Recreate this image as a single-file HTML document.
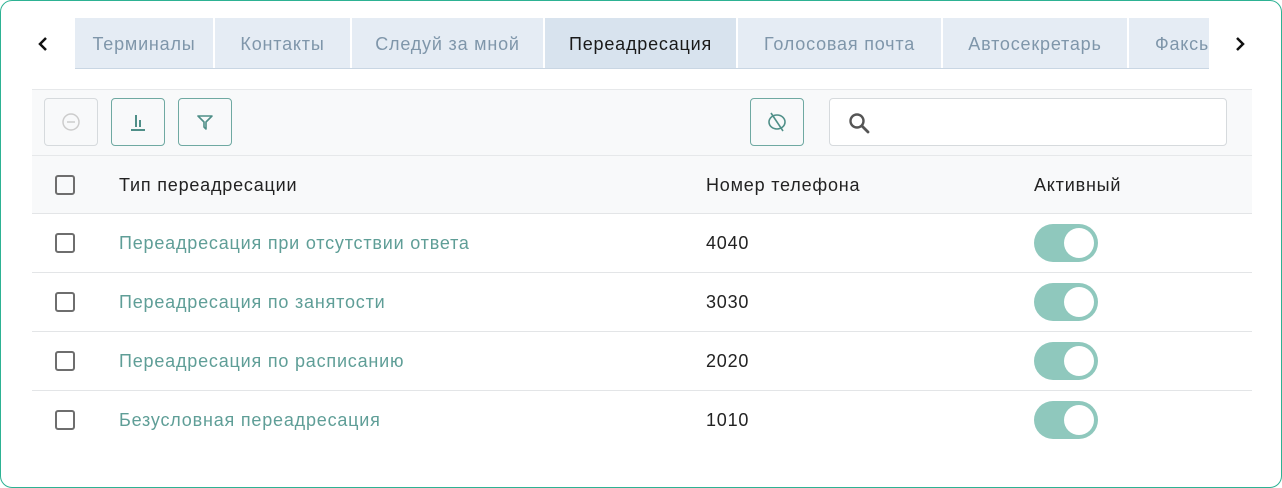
<!DOCTYPE html>
<html><head><meta charset="utf-8"><style>
*{box-sizing:border-box;margin:0;padding:0}
body{width:1282px;height:488px;background:#fff;font-family:"Liberation Sans","DejaVu Sans",sans-serif;position:relative;overflow:hidden;letter-spacing:0.8px}
.frame{position:absolute;left:0;top:0;width:1282px;height:488px;border:1.5px solid #2db293;border-radius:12px}
.tabs{position:absolute;left:75px;top:18px;height:51px;width:1134px;display:flex;overflow:hidden;background:#e5ecf4;border-bottom:1px solid #c9d6e3}
.tab{height:50px;line-height:52px;text-align:center;font-size:18px;color:#7f96aa;border-right:2px solid #fff;flex:none;white-space:nowrap}
.tab.act{background:#d8e3ee;color:#1a1a1a}
.tb{position:absolute;left:32px;top:89px;width:1220px;height:66px;background:#f8f9fa;border-top:1px solid #e6e8ea}
.btn{position:absolute;top:98px;width:54px;height:48px;border:1px solid #6fa9a2;border-radius:4px;background:#f8f9fa;display:flex;align-items:center;justify-content:center}
.btn.dis{border-color:#d6dadd}
.search{position:absolute;left:829px;top:98px;width:398px;height:48px;border:1px solid #d6dadd;border-radius:4px;background:#fff}
.hdr{position:absolute;left:32px;top:155px;width:1220px;height:59px;background:#f8f9fa;border-top:1px solid #e6e8ea;border-bottom:1px solid #e3e5e7}
.row{position:absolute;left:32px;width:1220px;height:59px;border-bottom:1px solid #e3e5e7}
.row.last{border-bottom:none}
.cb{position:absolute;left:23px;top:19px;width:20px;height:20px;border:2px solid #6e6e6e;border-radius:3px}
.c1{position:absolute;left:87px;top:0;line-height:58px;font-size:18px}
.c2{position:absolute;left:674px;top:0;line-height:58px;font-size:18px;color:#222}
.c3{position:absolute;left:1002px;top:0;line-height:58px;font-size:18px;color:#222}
.lnk{color:#5f9e97}
.tg{position:absolute;left:1002px;top:10px;width:64px;height:38px;border-radius:19px;background:#8fc8bd}
.tg:after{content:"";position:absolute;right:4px;top:4px;width:30px;height:30px;border-radius:50%;background:#fff}
</style></head><body>
<div class="frame"></div>
<svg style="position:absolute;left:37px;top:36px" width="12" height="16"><path d="M9 2 L3 8 L9 14" stroke="#111" stroke-width="2.5" fill="none"/></svg>
<svg style="position:absolute;left:1234px;top:36px" width="12" height="16"><path d="M3 2 L9 8 L3 14" stroke="#111" stroke-width="2.5" fill="none"/></svg>
<div class="tabs">
<div class="tab" style="width:140px">Терминалы</div>
<div class="tab" style="width:137px">Контакты</div>
<div class="tab" style="width:193px">Следуй за мной</div>
<div class="tab act" style="width:193px">Переадресация</div>
<div class="tab" style="width:205px">Голосовая почта</div>
<div class="tab" style="width:186px">Автосекретарь</div>
<div class="tab" style="width:120px;text-align:left;padding-left:26px">Факсы</div>
</div>
<div class="tb"></div>
<div class="btn dis" style="left:44px"><svg width="20" height="20"><circle cx="10" cy="10" r="8" stroke="#ccc" stroke-width="1.5" fill="none"/><path d="M6 10H14" stroke="#ccc" stroke-width="1.5"/></svg></div>
<div class="btn" style="left:111px"><svg width="20" height="20"><path d="M8 3V15M12 8V15M3 18H17" stroke="#4f8f88" stroke-width="2" fill="none"/></svg></div>
<div class="btn" style="left:178px"><svg width="20" height="20"><path d="M3 4H17L11 10V17L9 15V10Z" stroke="#4f8f88" stroke-width="1.6" fill="none" stroke-linejoin="round"/></svg></div>
<div class="btn" style="left:750px"><svg width="24" height="24"><ellipse cx="12" cy="12" rx="8" ry="7" stroke="#4f8f88" stroke-width="1.6" fill="none"/><path d="M6 3L18 21" stroke="#4f8f88" stroke-width="1.6"/></svg></div>
<div class="search"><svg style="position:absolute;left:17px;top:12px" width="24" height="24"><circle cx="10" cy="10" r="6.5" stroke="#555" stroke-width="2.4" fill="none"/><path d="M15 15L21 21" stroke="#555" stroke-width="2.8" stroke-linecap="round"/></svg></div>
<div class="hdr"><div class="cb"></div><div class="c1" style="color:#222">Тип переадресации</div><div class="c2">Номер телефона</div><div class="c3">Активный</div></div>
<div class="row" style="top:214px"><div class="cb"></div><div class="c1 lnk">Переадресация при отсутствии ответа</div><div class="c2">4040</div><div class="tg"></div></div>
<div class="row" style="top:273px"><div class="cb"></div><div class="c1 lnk">Переадресация по занятости</div><div class="c2">3030</div><div class="tg"></div></div>
<div class="row" style="top:332px"><div class="cb"></div><div class="c1 lnk">Переадресация по расписанию</div><div class="c2">2020</div><div class="tg"></div></div>
<div class="row last" style="top:391px"><div class="cb"></div><div class="c1 lnk">Безусловная переадресация</div><div class="c2">1010</div><div class="tg"></div></div>
</body></html>
